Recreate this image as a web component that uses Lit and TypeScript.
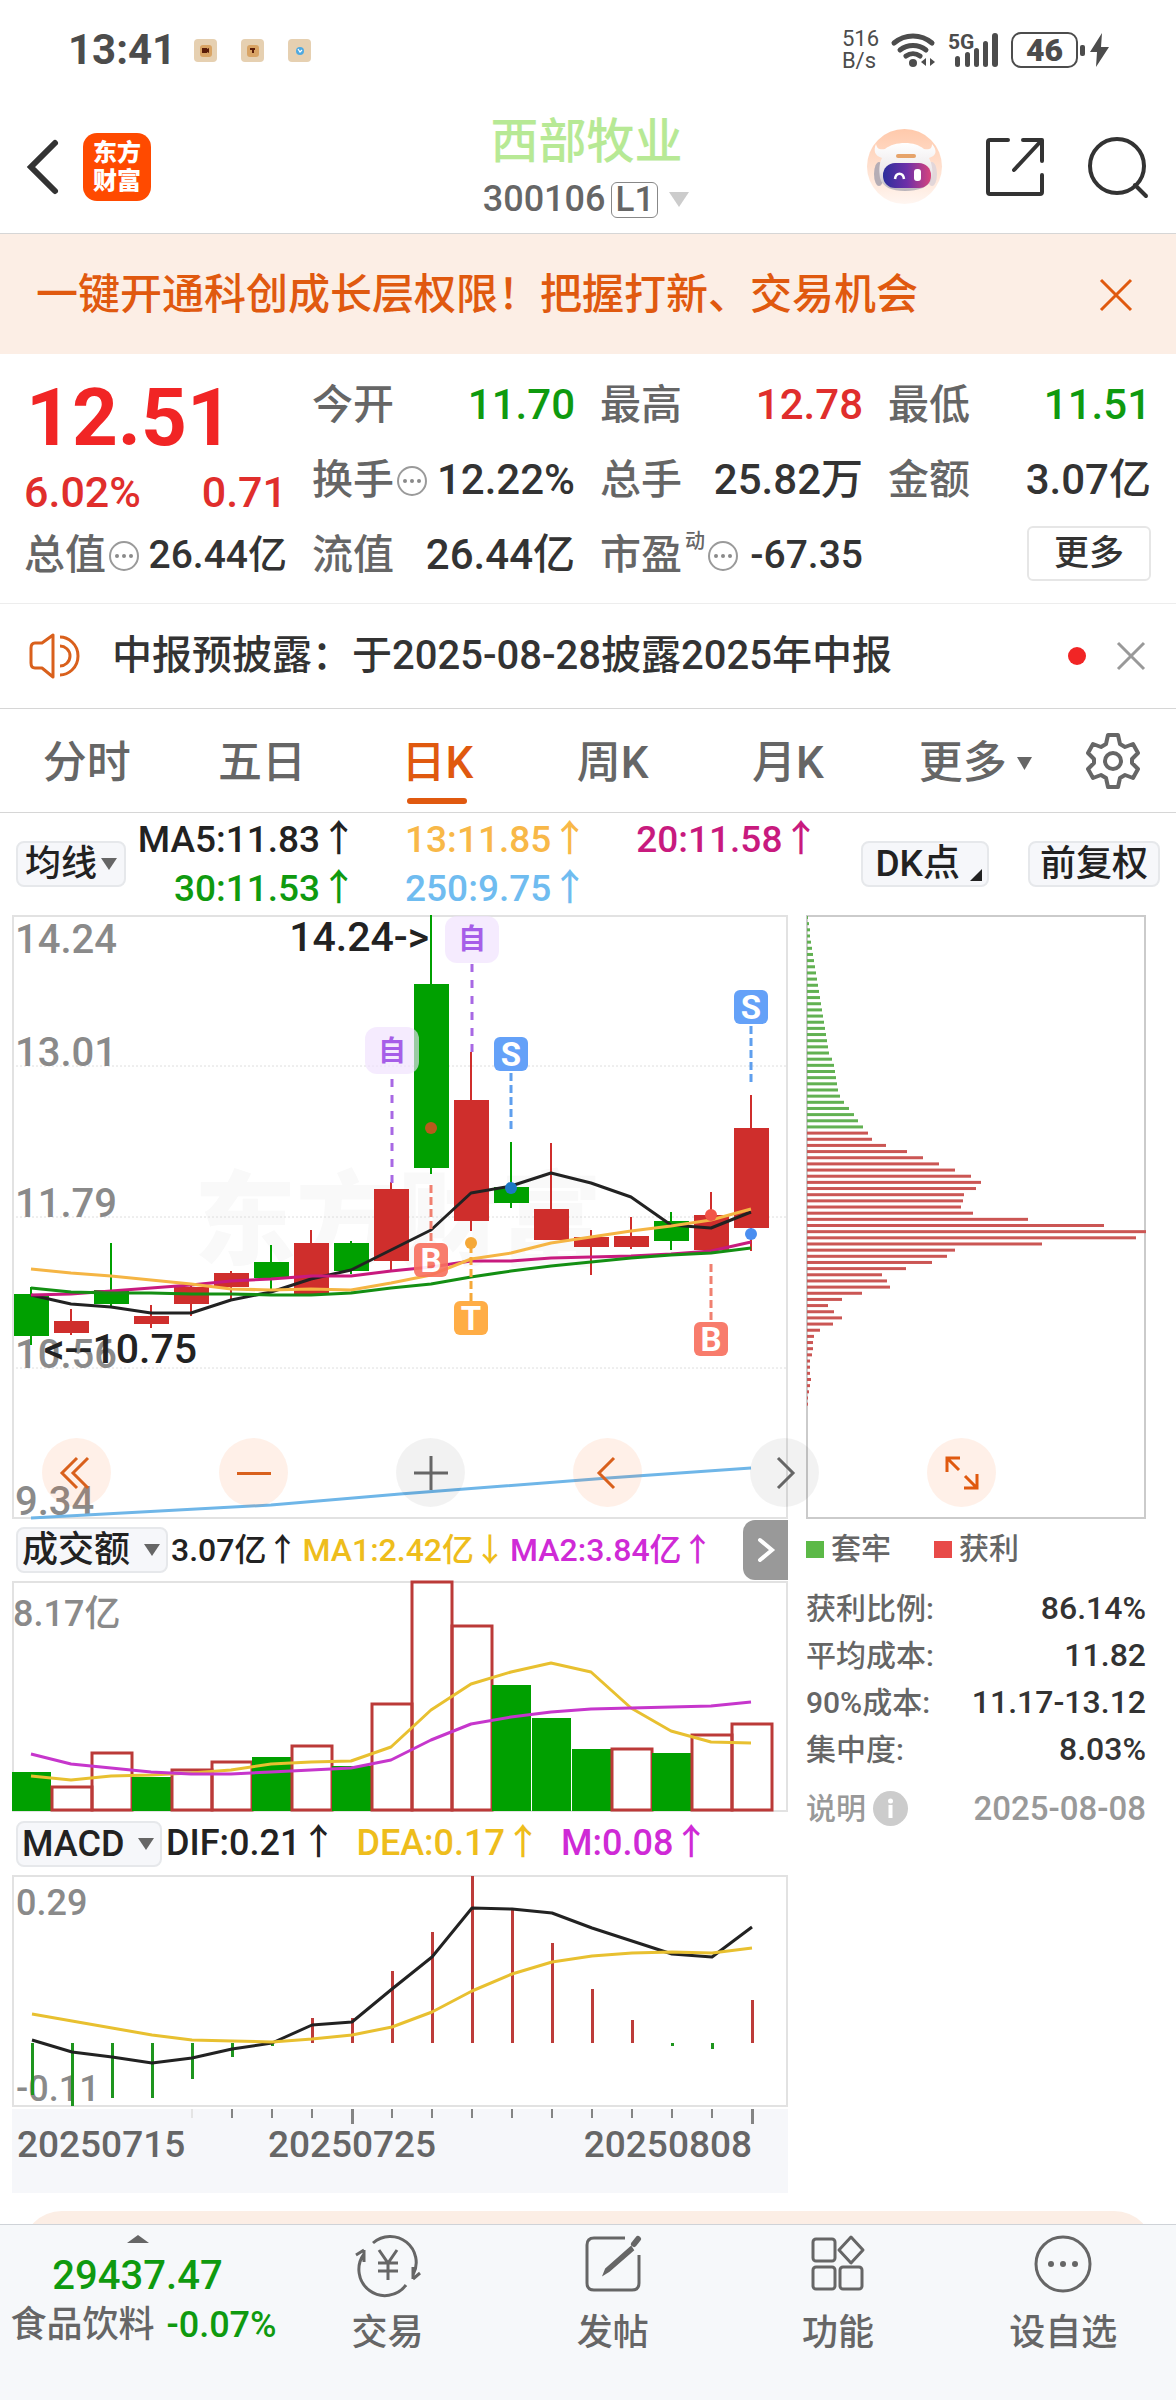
import { LitElement, html, svg, css } from "lit";
import { customElement, state } from "lit/decorators.js";

const UP = "#cf2e2c";
const DOWN = "#00a000";

const shared = css`
  :host {
    display: block;
  }
  svg {
    display: block;
    overflow: visible;
  }
  .plot {
    width: 100%;
    height: auto;
  }
  .frame {
    fill: none;
    stroke: #e2e2e2;
    stroke-width: 2;
  }
  .line {
    fill: none;
    stroke-width: 3;
    stroke-linejoin: round;
  }
  .scale {
    fill: #8a8a8a;
    font-weight: 500;
  }
`;

const path = (ys: number[], x0: number) =>
  ys.map((y, i) => `${x0 + i * 40},${y}`).join(" ");

/* open flag, body top, body bottom, wick top, wick bottom */
const CANDLES: [boolean, number, number, number, number][] = [
  [false, 379, 421, 372, 430],
  [true, 406, 418, 394, 420],
  [false, 375, 389, 328, 392],
  [true, 401, 409, 390, 413],
  [true, 372, 389, 369, 401],
  [true, 358, 372, 356, 385],
  [false, 347, 363, 330, 376],
  [true, 328, 379, 315, 379],
  [false, 328, 356, 326, 359],
  [true, 274, 346, 267, 356],
  [false, 69, 253, 0, 259],
  [true, 185, 306, 137, 316],
  [false, 272, 288, 227, 293],
  [true, 294, 325, 228, 325],
  [true, 322, 332, 315, 360],
  [true, 321, 332, 302, 334],
  [false, 306, 326, 297, 335],
  [true, 300, 335, 277, 335],
  [true, 213, 313, 180, 336],
];

const MA5 = [380, 389, 392, 398, 398, 385, 377, 364, 355, 335, 315, 278, 271, 258, 268, 282, 310, 313, 297];
const MA13 = [354, 358, 361, 365, 369, 374, 375, 374, 375, 368, 360, 344, 338, 328, 322, 316, 311, 305, 294];
const MA20 = [380, 379, 376, 373, 370, 366, 364, 361, 361, 356, 352, 346, 346, 343, 342, 341, 339, 336, 327];
const MA30 = [373, 377, 378, 378, 379, 379, 380, 380, 378, 373, 369, 362, 356, 351, 347, 343, 340, 338, 333];

@customElement("price-chart")
export class PriceChart extends LitElement {
  static styles = [
    shared,
    css`
      .grid {
        stroke: #dedede;
        stroke-width: 1;
        stroke-dasharray: 2 2;
      }
      .mark {
        fill: #fff;
        font-size: 33px;
        font-weight: 700;
        text-anchor: middle;
      }
      .self {
        fill: #a65ee8;
        font-size: 28px;
        font-weight: 700;
        text-anchor: middle;
      }
      .note {
        fill: #222;
        font-size: 41px;
        font-weight: 500;
        text-anchor: end;
      }
      .watermark {
        fill: #f9f9f9;
        font-size: 102px;
        font-weight: 900;
      }
    `,
  ];

  private badge(x: number, y: number, letter: string, color: string) {
    return svg`
      <rect x=${x} y=${y} width="34" height="34" rx="6" fill=${color}></rect>
      <text class="mark" x=${x + 17} y=${y + 29}>${letter}</text>`;
  }

  private dash(x: number, y1: number, y2: number, color: string, step = "8 4") {
    return svg`<line x1=${x} x2=${x} y1=${y1} y2=${y2} stroke=${color} stroke-width="3" stroke-dasharray=${step}></line>`;
  }

  render() {
    return html`<svg class="plot" viewBox="0 0 776 604" role="img" aria-label="日K">
      <text class="watermark" x="182" y="342">东方财富</text>
      ${[151, 302, 453].map((y) => svg`<line class="grid" x1="0" x2="776" y1=${y} y2=${y}></line>`)}
      <rect class="frame" x="1" y="1" width="774" height="602"></rect>
      ${[["14.24", 38], ["13.01", 151], ["11.79", 302], ["10.56", 453], ["9.34", 600]].map(
        ([t, y]) => svg`<text class="scale" font-size="40" x="3" y=${y}>${t}</text>`
      )}
      ${CANDLES.map(([up, top, bottom, high, low], i) => {
        const x = 19 + i * 40;
        const c = up ? UP : DOWN;
        return svg`
          <rect x=${x - 1} y=${high} width="2" height=${low - high} fill=${c}></rect>
          <rect x=${x - 17} y=${top} width="35" height=${bottom - top} fill=${c}></rect>`;
      })}
      <polyline class="line" stroke="#222" points=${path(MA5, 19)}></polyline>
      <polyline class="line" stroke="#c81a7e" points=${path(MA20, 19)}></polyline>
      <polyline class="line" stroke="#f5b544" points=${path(MA13, 19)}></polyline>
      <polyline class="line" stroke="#138f13" points=${path(MA30, 19)}></polyline>
      <polyline class="line" stroke="#6fb6e8" points="19,603 259,590 388,579 596,563 739,553"></polyline>
      <text class="note" x="417" y="36">14.24-&gt;</text>
      <text class="note" x="185" y="448">&lt;--10.75</text>
      ${this.dash(380, 164, 268, "#a868e4", "8 8")}
      ${this.dash(460, 49, 137, "#a868e4", "8 8")}
      ${this.dash(499, 158, 214, "#5f9fee")}
      ${this.dash(739, 111, 168, "#5f9fee")}
      ${this.dash(419, 270, 328, "#f08070")}
      ${this.dash(699, 349, 406, "#f08070")}
      <rect x="353" y="112" width="54" height="47" rx="12" fill="#f0e0fd" fill-opacity=".65"></rect>
      <text class="self" x="380" y="146">自</text>
      <rect x="433" y="1" width="54" height="47" rx="12" fill="#f0e0fd" fill-opacity=".65"></rect>
      <text class="self" x="460" y="34">自</text>
      ${this.badge(482, 122, "S", "#64a1f8")}
      ${this.badge(722, 75, "S", "#64a1f8")}
      <g opacity=".9">${this.badge(402, 328, "B", "#f8705e")}</g>
      ${this.badge(682, 407, "B", "#f87c6c")}
      ${this.badge(442, 386, "T", "#ffad46")}
      ${this.dash(459, 330, 386, "#f5a838")}
      <circle cx="459" cy="328" r="6" fill="#f5a838"></circle>
      <circle cx="419" cy="213" r="6" fill="#b85a1c"></circle>
      <circle cx="499" cy="273" r="6" fill="#1c78c4"></circle>
      <circle cx="699" cy="300" r="6" fill="#f25548"></circle>
      <circle cx="739" cy="319" r="6" fill="#4a8ef0"></circle>
    </svg>`;
  }
}

const VOLUME: [boolean, number][] = [
  [false, 191], [true, 206], [true, 172], [false, 196], [true, 189], [true, 181],
  [false, 176], [true, 165], [false, 185], [true, 123], [true, 1], [true, 45],
  [false, 104], [false, 137], [false, 168], [true, 168], [false, 172], [true, 154], [true, 143],
];
const VOL_MA1 = [195, 199, 195, 194, 192, 189, 183, 181, 180, 166, 129, 103, 91, 82, 91, 127, 150, 161, 162];
const VOL_MA2 = [173, 183, 187, 191, 193, 193, 191, 189, 187, 179, 159, 143, 136, 131, 128, 127, 126, 125, 121];

@customElement("volume-chart")
export class VolumeChart extends LitElement {
  static styles = [shared];

  render() {
    return html`<svg class="plot" viewBox="0 0 776 231" role="img" aria-label="成交额">
      <rect class="frame" x="1" y="1" width="774" height="229"></rect>
      <text class="scale" font-size="36" x="1" y="45">8.17亿</text>
      ${VOLUME.map(([up, top], i) =>
        up
          ? svg`<rect x=${i * 40} y=${top} width="40" height=${229 - top} fill="none" stroke="#bb3a38" stroke-width="3"></rect>`
          : svg`<rect x=${i * 40} y=${top} width="39" height=${230 - top} fill=${DOWN}></rect>`
      )}
      <polyline class="line" stroke="#e8c030" points=${path(VOL_MA1, 19)}></polyline>
      <polyline class="line" stroke="#c636cc" points=${path(VOL_MA2, 19)}></polyline>
    </svg>`;
  }
}

const MACD = [220, 231, 223, 223, 204, 182, 171, 143, 143, 96, 57, 1, 35, 68, 114, 145, 171, 174, 125];
const DIF = [165, 177, 182, 188, 183, 174, 168, 150, 147, 114, 82, 33, 34, 38, 53, 66, 79, 82, 52];
const DEA = [139, 146, 153, 160, 165, 166, 167, 164, 160, 152, 137, 116, 99, 87, 81, 78, 77, 78, 73];

@customElement("macd-chart")
export class MacdChart extends LitElement {
  static styles = [
    shared,
    css`
      .axis {
        margin-top: 2px;
        background: #f6f7fa;
      }
      .date {
        fill: #666;
        font-size: 37px;
        font-weight: 500;
      }
    `,
  ];

  render() {
    return html`<svg class="plot" viewBox="0 0 776 232" role="img" aria-label="MACD">
        <rect class="frame" x="1" y="1" width="774" height="230"></rect>
        <text class="scale" font-size="36" x="4" y="40">0.29</text>
        <text class="scale" font-size="36" x="4" y="226">-0.11</text>
        ${MACD.map((y, i) => {
          const down = y > 168;
          return svg`<rect x=${19 + i * 40} y=${down ? 168 : y} width="3" height=${Math.abs(y - 168)} fill=${down ? "#1e951e" : "#bd3c3a"}></rect>`;
        })}
        <polyline class="line" stroke="#222" points=${path(DIF, 20)}></polyline>
        <polyline class="line" stroke="#e8c030" points=${path(DEA, 20)}></polyline>
      </svg>
      <svg class="plot axis" viewBox="0 0 776 84">
        ${Array.from({ length: 15 }, (_, k) => k + 4).map((i) => {
          const major = i === 8 || i === 18;
          return svg`<rect x=${19 + i * 40} y="0" width=${major ? 3 : 2} height=${major ? 15 : 9} fill=${i === 4 ? "#e4e4e4" : "#848484"}></rect>`;
        })}
        <text class="date" x="5" y="48">20250715</text>
        <text class="date" x="340" y="48" text-anchor="middle">20250725</text>
        <text class="date" x="740" y="48" text-anchor="end">20250808</text>
      </svg>`;
  }
}

const TRAPPED = [
  1, 2, 3, 3, 4, 5, 6, 7, 8, 9, 10, 11, 12, 13, 14, 15, 16, 17, 18, 19, 20, 21, 22, 25, 27, 28, 29, 30, 31, 33, 37,
  42, 47, 51, 56,
];
const PROFIT = [
  61, 65, 79, 100, 116, 132, 148, 164, 174, 169, 157, 156, 154, 166, 221, 297, 339, 329, 235, 148, 140, 125, 99, 75,
  80, 83, 55, 35, 21, 27, 35, 26, 13, 7, 6, 6, 5, 3, 3, 3, 4, 3, 2, 1, 1,
];

@customElement("cost-chart")
export class CostChart extends LitElement {
  static styles = [
    shared,
    css`
      .frame {
        stroke: #cbcbcb;
      }
    `,
  ];

  render() {
    const all = [...TRAPPED, ...PROFIT];
    return html`<svg class="plot" viewBox="0 0 340 604" role="img" aria-label="套牢 获利">
      <rect class="frame" x="1" y="1" width="338" height="602"></rect>
      ${all.map(
        (w, i) =>
          svg`<rect x="1" y=${1 + i * 6.16} width=${w} height="3" fill=${i < TRAPPED.length ? "#62b152" : "#cb5654"}></rect>`
      )}
    </svg>`;
  }
}

const arrowDown = html`<svg class="tri" width="16" height="12" viewBox="0 0 16 12"><path d="M0 0h16L8 12z" fill="#666" /></svg>`;
const moreDots = html`<svg width="30" height="30" viewBox="0 0 30 30">
  <circle cx="15" cy="15" r="14" fill="none" stroke="#9a9a9a" stroke-width="2" />
  <circle cx="8" cy="15" r="2" fill="#8a8a8a" /><circle cx="15" cy="15" r="2" fill="#8a8a8a" /><circle cx="22" cy="15" r="2" fill="#8a8a8a" />
</svg>`;

@customElement("app-root")
export class AppRoot extends LitElement {
  @state() private tab = "日K";

  static styles = css`
    :host {
      display: block;
      font-family: Roboto, "Noto Sans CJK SC", sans-serif;
      font-weight: 500;
      line-height: 1.2;
      color: #333;
      background: #fff;
    }
    * {
      box-sizing: border-box;
    }
    svg {
      display: block;
      flex: none;
      overflow: visible;
    }
    button,
    select {
      font: inherit;
      color: inherit;
      background: none;
      border: 0;
      padding: 0;
      margin: 0;
      appearance: none;
      cursor: pointer;
      white-space: nowrap;
    }
    a {
      color: inherit;
      text-decoration: none;
    }
    h1,
    p,
    dl,
    dd,
    dt {
      margin: 0;
      font-weight: 500;
    }
    .up {
      color: #e02e2c;
    }
    .down {
      color: #0f9a0f;
    }

    .status {
      display: flex;
      align-items: center;
      height: 100px;
      padding: 0 66px 0 68px;
      color: #4c4c4c;
    }
    .clock {
      font-size: 42px;
      font-weight: 700;
    }
    .notes {
      display: flex;
      gap: 24px;
      margin: 0 auto 0 18px;
    }
    .speed {
      font-size: 22px;
      line-height: 22px;
      font-weight: 400;
      margin-right: 12px;
    }
    .signal {
      margin: 0 11px 0 11px;
    }
    .battery {
      display: flex;
      align-items: center;
      gap: 6px;
    }
    .level {
      width: 67px;
      height: 36px;
      border: 2px solid #4c4c4c;
      border-radius: 10px;
      font-size: 32px;
      line-height: 33px;
      font-weight: 900;
      text-align: center;
    }

    .header {
      display: grid;
      grid-template-columns: 1fr auto 1fr;
      align-items: center;
      height: 134px;
      padding: 0 28px 0 25px;
      border-bottom: 1px solid #d6d6d6;
    }
    .left,
    .right {
      display: flex;
      align-items: center;
      gap: 24px;
    }
    .right {
      justify-content: flex-end;
      gap: 44px;
    }
    .logo {
      width: 68px;
      height: 68px;
      padding-top: 6px;
      border-radius: 14px;
      background: #ff4a00;
      color: #fff;
      font-size: 24px;
      line-height: 28px;
      font-weight: 900;
      text-align: center;
    }
    .name {
      font-size: 48px;
      line-height: 58px;
      padding-top: 8px;
      color: #b7e995;
      text-align: center;
    }
    .code {
      display: flex;
      align-items: center;
      gap: 6px;
      font-size: 36px;
      line-height: 57px;
      color: #666;
    }
    .lv {
      border: 1px solid #888;
      border-radius: 6px;
      font-size: 35px;
      line-height: 34px;
      padding: 0 3px;
    }
    .code .tri {
      margin-left: 4px;
    }

    .promo {
      display: flex;
      align-items: center;
      justify-content: space-between;
      height: 120px;
      padding: 2px 43px 0 36px;
      background: #fceee5;
      color: #e0590f;
      font-size: 42px;
    }

    .quote {
      display: grid;
      grid-template-columns: repeat(4, minmax(0, 1fr));
      grid-auto-rows: 75px;
      column-gap: 25px;
      padding: 14px 25px 10px 24px;
      border-bottom: 1px solid #ededed;
      font-size: 42px;
    }
    .last {
      grid-row: span 2;
      padding-top: 8px;
    }
    .price {
      padding-left: 2px;
      font-size: 80px;
      line-height: 84px;
      font-weight: 700;
      color: #f12525;
    }
    .change {
      display: flex;
      justify-content: space-between;
      font-size: 43px;
      line-height: 64px;
    }
    .cell {
      display: flex;
      align-items: center;
      white-space: nowrap;
    }
    .cell dt {
      color: #666;
      display: flex;
      align-items: center;
      gap: 3px;
      font-size: 41px;
    }
    .cell dd {
      margin-left: auto;
    }
    .cell.small dd {
      font-size: 39px;
    }
    .cell sup {
      font-size: 20px;
      line-height: 20px;
      align-self: flex-start;
    }
    .end {
      display: flex;
      justify-content: flex-end;
      align-items: center;
    }
    .more {
      width: 124px;
      height: 55px;
      border: 2px solid #e6e6e6;
      border-radius: 6px;
      font-size: 35px;
      line-height: 48px;
      margin-bottom: 4px;
    }

    .notice {
      display: flex;
      align-items: center;
      height: 105px;
      padding: 0 30px;
      border-bottom: 1px solid #d6d6d6;
      font-size: 40px;
    }
    .notice a {
      margin: 0 auto 0 32px;
    }
    .dot {
      width: 18px;
      height: 18px;
      border-radius: 50%;
      background: #f12525;
      margin-right: 30px;
    }

    .tabs {
      display: grid;
      grid-template-columns: repeat(6, minmax(0, 1fr)) 124px;
      height: 104px;
      border-bottom: 1px solid #d6d6d6;
      font-size: 44px;
      color: #666;
    }
    .tabs button {
      display: flex;
      align-items: center;
      justify-content: center;
      gap: 10px;
      padding: 6px 2px 0 0;
    }
    .tabs .rest {
      padding-left: 24px;
    }
    .tabs .gear {
      padding-top: 0;
    }
    .tabs .on {
      color: #e0590f;
      position: relative;
    }
    .tabs .on::after {
      content: "";
      position: absolute;
      bottom: 8px;
      width: 60px;
      height: 6px;
      border-radius: 3px;
      background: #e0590f;
    }

    .averages {
      display: flex;
      align-items: center;
      height: 102px;
      padding: 0 16px;
      font-size: 37px;
      color: #222;
    }
    .chip {
      display: flex;
      align-items: center;
      height: 46px;
      border: 2px solid #e6e8eb;
      border-radius: 8px;
      background: #f6f7fa;
      font-size: 36px;
      line-height: 40px;
      color: #222;
    }
    .mas {
      flex: 1;
      display: grid;
      grid-template-columns: repeat(3, 1fr);
      line-height: 49px;
      text-align: right;
      white-space: nowrap;
    }
    .pick {
      padding: 0 7px;
      gap: 3px;
    }
    .pick.wide {
      padding: 0 6px 0 4px;
      gap: 13px;
    }
    .dk {
      margin: 0 39px 0 42px;
      padding: 0 5px 0 12px;
      gap: 10px;
      font-size: 37px;
    }
    .dk svg {
      align-self: flex-end;
      margin-bottom: 4px;
    }
    .adj {
      padding: 0 10px;
    }

    .charts {
      position: relative;
      display: grid;
      grid-template-columns: minmax(0, 776fr) minmax(0, 340fr);
      column-gap: 18px;
      margin: 0 30px 0 12px;
    }
    .study {
      display: flex;
      align-items: center;
      height: 62px;
      padding-left: 4px;
      font-size: 36px;
      color: #222;
      white-space: nowrap;
    }
    .study.macd {
      height: 63px;
    }
    .vals {
      display: flex;
      gap: 20px;
      margin-left: 4px;
    }
    .vals.tight {
      gap: 4px;
      font-size: 32px;
      margin-left: 3px;
    }
    .next {
      width: 45px;
      height: 60px;
      margin-left: auto;
      border-radius: 12px 0 0 12px;
      background: #999;
      display: grid;
      place-items: center;
    }
    .tools {
      position: absolute;
      left: 30px;
      right: 150px;
      top: 0;
      display: flex;
      justify-content: space-between;
      pointer-events: none;
      padding-top: 523px;
    }
    .tools button {
      width: 69px;
      height: 69px;
      border-radius: 50%;
      display: grid;
      place-items: center;
      background: rgba(255, 110, 30, 0.1);
      pointer-events: auto;
    }
    .tools .grey {
      background: rgba(0, 0, 0, 0.05);
    }

    .side {
      font-size: 30px;
      color: #666;
    }
    .legend {
      display: flex;
      align-items: center;
      height: 60px;
      gap: 7px;
      margin-bottom: 6px;
    }
    .key {
      width: 18px;
      height: 17px;
      background: #5cb947;
    }
    .key.red {
      background: #e84a48;
      margin-left: 36px;
    }
    .side .row {
      display: flex;
      align-items: center;
      justify-content: space-between;
      height: 47px;
      white-space: nowrap;
    }
    .side dd {
      color: #333;
      font-size: 32px;
    }
    .side .about {
      display: flex;
      align-items: center;
      gap: 7px;
      margin-top: 12px;
      height: 47px;
      color: #999;
    }
    .side time {
      margin-left: auto;
      font-size: 33px;
    }

    .peek {
      height: 13px;
      margin: 18px 22px 0;
      overflow: hidden;
    }
    .peek::before {
      content: "";
      display: block;
      height: 80px;
      border-radius: 40px;
      background: #fceee5;
    }
    .nav {
      display: grid;
      grid-template-columns: 275px repeat(4, minmax(0, 1fr));
      height: 176px;
      border-top: 1px solid #cfd3d8;
      background: #f6f8fa;
      color: #666;
      font-size: 36px;
    }
    .nav a {
      display: flex;
      flex-direction: column;
      align-items: center;
      padding-top: 10px;
      line-height: 40px;
    }
    .nav a.item {
      gap: 20px;
    }
    .index {
      font-size: 40px;
      line-height: 48px;
      margin-top: 9px;
    }
    .sector {
      display: flex;
      gap: 12px;
      padding-left: 12px;
      line-height: 50px;
      white-space: nowrap;
    }
  `;

  private cell(label: unknown, value: string, tone = "", size = "") {
    return html`<dl class="cell ${size}"><dt>${label}</dt><dd class=${tone}>${value}</dd></dl>`;
  }

  private pick(name: string, wide = "") {
    return html`<label class="chip pick ${wide}"><select aria-label=${name}><option>${name}</option></select>${arrowDown}</label>`;
  }

  render() {
    return html`
      <div class="status">
        <span class="clock">13:41</span>
        <div class="notes">
          <svg width="23" height="23" viewBox="0 0 23 23"><rect width="23" height="23" rx="4" fill="#e6d0b1" /><rect x="6" y="6" width="12" height="12" rx="3" fill="#d9a465" /><path d="M8 9h5v1l2-1v5l-2-1v1H8z" fill="#5a1c08" /></svg>
          <svg width="23" height="23" viewBox="0 0 23 23"><rect width="23" height="23" rx="4" fill="#e6d0b1" /><rect x="6" y="6" width="12" height="12" rx="3" fill="#d9a465" /><path d="M9 10h5M12 9v5" stroke="#5a1c08" stroke-width="2" /></svg>
          <svg width="23" height="23" viewBox="0 0 23 23"><rect width="23" height="23" rx="4" fill="#e6d0b1" /><circle cx="12" cy="12" r="4" fill="#4fa9e0" /><path d="M10 10l2 3 2-2" fill="none" stroke="#fff" stroke-width="1.2" /></svg>
        </div>
        <div class="speed">516<br />B/s</div>
        <svg width="46" height="36" viewBox="0 0 46 36" fill="none" stroke="#4c4c4c" stroke-width="5" stroke-linecap="round">
          <path d="M3 11a29 29 0 0 1 38 0M9 18a21 21 0 0 1 26 0M15 24a12 12 0 0 1 14 0" />
          <circle cx="22" cy="31" r="4" fill="#4c4c4c" stroke="none" />
          <path d="M35 26v8l-5-4zM39 26v8l5-4z" fill="#4c4c4c" stroke="none" />
        </svg>
        <svg class="signal" width="52" height="36" viewBox="0 0 52 36" fill="#4c4c4c">
          <text x="0" y="17" font-size="21" font-weight="700">5G</text>
          <rect x="7" y="24" width="5" height="11" rx="2.5" /><rect x="17" y="20" width="5" height="15" rx="2.5" /><rect x="26" y="16" width="5" height="19" rx="2.5" /><rect x="35" y="9" width="5" height="26" rx="2.5" /><rect x="44" y="1" width="6" height="34" rx="3" />
        </svg>
        <div class="battery">
          <div class="level">46</div>
          <svg width="26" height="36" viewBox="0 0 26 36" fill="#4c4c4c"><rect x="-4" y="13" width="5" height="11" rx="2" /><path d="M18 1L6 20h7l-1 15 13-20h-8z" /></svg>
        </div>
      </div>

      <header class="header">
        <div class="left">
          <button aria-label="返回">
            <svg width="34" height="56" viewBox="0 0 34 56"><path d="M30 4L6 28l24 24" fill="none" stroke="#333" stroke-width="6" stroke-linecap="round" stroke-linejoin="miter" /></svg>
          </button>
          <a class="logo" href="#">东方<br />财富</a>
        </div>
        <div>
          <h1 class="name">西部牧业</h1>
          <div class="code">
            300106<span class="lv">L1</span>
            <svg class="tri" width="22" height="15" viewBox="0 0 22 15"><path d="M1 0h20L11 15z" fill="#ccc" /></svg>
          </div>
        </div>
        <div class="right">
          <button aria-label="助手">
            <svg width="75" height="75" viewBox="0 0 75 75">
              <defs>
                <linearGradient id="halo" x2="0" y2="1"><stop offset="0" stop-color="#ffc9ab" /><stop offset="1" stop-color="#fff6f1" /></linearGradient>
                <linearGradient id="visor"><stop offset="0" stop-color="#2c2f9c" /><stop offset=".5" stop-color="#6d2fa8" /><stop offset="1" stop-color="#d8447c" /></linearGradient>
                <linearGradient id="shell" x2="0" y2="1"><stop offset="0" stop-color="#fff" /><stop offset=".6" stop-color="#ece8ea" /><stop offset="1" stop-color="#b9b3b9" /></linearGradient>
              </defs>
              <circle cx="37.5" cy="37.5" r="37.5" fill="url(#halo)" />
              <ellipse cx="12" cy="45" rx="5" ry="12" fill="#b5adb5" /><ellipse cx="65" cy="45" rx="5" ry="12" fill="#e2d6d9" />
              <path d="M9 15c-3 7-1 12 6 14-3 6-3 12-2 20 2 9 12 13 25 13s25-4 27-13c1-8 0-14-3-20 7-2 9-7 3-14 0 5-3 6-8 5-5-4-11-6-19-6s-15 2-20 6c-5 1-8 0-9-5z" fill="url(#shell)" />
              <rect x="16" y="34" width="48" height="25" rx="12" fill="url(#visor)" />
              <rect x="29" y="25" width="20" height="4" rx="2" fill="#e6a36a" />
              <path d="M28 50c1-7 8-7 9 0" fill="none" stroke="#fff" stroke-width="2.5" />
              <rect x="47" y="40" width="7" height="12" rx="3" fill="#fff" />
            </svg>
          </button>
          <button aria-label="分享">
            <svg width="58" height="58" viewBox="0 0 58 58" fill="none" stroke="#333" stroke-width="4" stroke-linecap="round" stroke-linejoin="round"><path d="M22 2H4q-2 0-2 2v50q0 2 2 2h50q2 0 2-2V37M37 2h19v21M55 3L28 32" /></svg>
          </button>
          <button aria-label="搜索">
            <svg width="60" height="60" viewBox="0 0 60 60" fill="none" stroke="#333" stroke-width="4" stroke-linecap="round"><circle cx="29" cy="29" r="27" /><path d="M47 48l11 11" /></svg>
          </button>
        </div>
      </header>

      <div class="promo">
        <a href="#">一键开通科创成长层权限！把握打新、交易机会</a>
        <button aria-label="关闭">
          <svg width="34" height="34" viewBox="0 0 34 34"><path d="M2 2l30 30M32 2L2 32" stroke="#e0590f" stroke-width="3" /></svg>
        </button>
      </div>

      <section class="quote">
        <div class="last">
          <div class="price">12.51</div>
          <div class="change up"><span>6.02%</span><span>0.71</span></div>
        </div>
        ${this.cell("今开", "11.70", "down")} ${this.cell("最高", "12.78", "up")} ${this.cell("最低", "11.51", "down")}
        ${this.cell(html`换手${moreDots}`, "12.22%")} ${this.cell("总手", "25.82万")} ${this.cell("金额", "3.07亿")}
        ${this.cell(html`总值${moreDots}`, "26.44亿", "", "small")} ${this.cell("流值", "26.44亿")}
        ${this.cell(html`市盈<sup>动</sup>${moreDots}`, "-67.35", "", "small")}
        <div class="end"><button class="more">更多</button></div>
      </section>

      <div class="notice">
        <svg width="50" height="46" viewBox="0 0 50 46" fill="none" stroke="#d9601c" stroke-width="3" stroke-linejoin="round"><path d="M23 2v42L12 35H5q-4 0-4-5V15q0-5 4-5h7zM30 4c8 0 18 7 18 19s-10 19-18 19M30 13c5 0 10 4 10 10s-5 10-10 10" /></svg>
        <a href="#">中报预披露：于2025-08-28披露2025年中报</a>
        <span class="dot"></span>
        <button aria-label="关闭">
          <svg width="30" height="30" viewBox="0 0 30 30"><path d="M2 2l26 26M28 2L2 28" stroke="#999" stroke-width="3" /></svg>
        </button>
      </div>

      <nav class="tabs">
        ${["分时", "五日", "日K", "周K", "月K"].map(
          (t) => html`<button class=${t === this.tab ? "on" : ""} @click=${() => (this.tab = t)}>${t}</button>`
        )}
        <button class="rest">更多<svg width="15" height="13" viewBox="0 0 15 13"><path d="M0 0h15L7.500 13z" fill="#666" /></svg></button>
        <button class="gear" aria-label="设置">
          <svg width="52" height="56" viewBox="0 0 52 56" fill="none" stroke="#666" stroke-width="4" stroke-linejoin="round">
            <path d="M21 2h10l2 9 5 3 8-3 5 9-6 6v4l6 6-5 9-8-3-5 3-2 9H21l-2-9-5-3-8 3-5-9 6-6v-4l-6-6 5-9 8 3 5-3z" />
            <circle cx="26" cy="28" r="8" />
          </svg>
        </button>
      </nav>

      <div class="averages">
        ${this.pick("均线")}
        <div class="mas">
          <span>MA5:11.83↑</span>
          <span style="color:#f8b848">13:11.85↑</span>
          <span style="color:#c81a7e">20:11.58↑</span>
          <span style="color:#0f9a0f">30:11.53↑</span>
          <span style="color:#6fbcf0">250:9.75↑</span>
        </div>
        <button class="chip dk">DK点<svg width="12" height="12" viewBox="0 0 12 12"><path d="M12 0v12H0z" fill="#222" /></svg></button>
        <button class="chip adj">前复权</button>
      </div>

      <main class="charts">
        <div>
          <price-chart></price-chart>
          <div class="study">
            ${this.pick("成交额", "wide")}
            <div class="vals tight">
              <span>3.07亿↑</span><span style="color:#eebd1c">MA1:2.42亿↓</span><span style="color:#cf2ad6">MA2:3.84亿↑</span>
            </div>
            <button class="next" aria-label="下一项">
              <svg width="18" height="26" viewBox="0 0 18 26"><path d="M3 3l12 10L3 23" fill="none" stroke="#fff" stroke-width="4" stroke-linecap="round" /></svg>
            </button>
          </div>
          <volume-chart></volume-chart>
          <div class="study macd">
            ${this.pick("MACD", "wide")}
            <div class="vals">
              <span>DIF:0.21↑</span><span style="color:#eebd1c">DEA:0.17↑</span><span style="color:#cf2ad6">M:0.08↑</span>
            </div>
          </div>
          <macd-chart></macd-chart>
        </div>
        <aside class="side">
          <cost-chart></cost-chart>
          <div class="legend"><span class="key"></span>套牢<span class="key red"></span>获利</div>
          ${[["获利比例:", "86.14%"], ["平均成本:", "11.82"], ["90%成本:", "11.17-13.12"], ["集中度:", "8.03%"]].map(
            ([k, v]) => html`<dl class="row"><dt>${k}</dt><dd>${v}</dd></dl>`
          )}
          <div class="about">
            说明
            <svg width="35" height="35" viewBox="0 0 35 35"><circle cx="17.500" cy="17.500" r="17.500" fill="#ccc" /><circle cx="17.500" cy="10" r="2.500" fill="#fff" /><rect x="15.500" y="14" width="4" height="13" fill="#fff" /></svg>
            <time>2025-08-08</time>
          </div>
        </aside>
        <div class="tools">
          <button aria-label="最左"><svg width="30" height="32" viewBox="3 0 30 32" fill="none" stroke="#d9601c" stroke-width="3"><path d="M18 1L3 16l15 15M29 1L14 16l15 15" /></svg></button>
          <button aria-label="缩小"><svg width="34" height="4" viewBox="0 0 34 4"><rect y="1" width="34" height="3" fill="#d9601c" /></svg></button>
          <button class="grey" aria-label="放大"><svg width="34" height="34" viewBox="0 0 34 34" stroke="#666" stroke-width="3"><path d="M0 17h34M17 0v34" /></svg></button>
          <button aria-label="左移"><svg width="20" height="32" viewBox="2 0 20 32" fill="none" stroke="#d9601c" stroke-width="3"><path d="M18 1L3 16l15 15" /></svg></button>
          <button class="grey" aria-label="右移"><svg width="20" height="32" viewBox="-1 0 20 32" fill="none" stroke="#666" stroke-width="3"><path d="M2 1l15 15L2 31" /></svg></button>
          <button aria-label="全屏"><svg width="34" height="34" viewBox="0 0 34 34" fill="none" stroke="#e0590f" stroke-width="3"><path d="M2 16V2h13M2 2l12 12M32 18v14H19M32 32L20 20" /></svg></button>
        </div>
      </main>

      <div class="peek"></div>
      <nav class="nav">
        <a class="board" href="#">
          <svg width="22" height="8" viewBox="0 0 22 8"><path d="M11 0l11 8H0z" fill="#666" /></svg>
          <span class="index down">29437.47</span>
          <span class="sector">食品饮料<span class="down">-0.07%</span></span>
        </a>
        <a class="item" href="#">
          <svg width="66" height="58" viewBox="0 0 66 58" fill="none" stroke="#666" stroke-width="3">
            <path d="M18 8A26 26 0 0 1 58 40M58 44V32M58 44l7-6M51 50A26 26 0 0 1 9 19M9 15v12M9 15l-8 5M24 15l9 13 9-13M33 28v17M23 28h20M23 36h20" />
          </svg>交易</a>
        <a class="item" href="#">
          <svg width="56" height="58" viewBox="0 0 56 58" fill="none" stroke="#666" stroke-width="3">
            <path d="M40 3H9Q2 3 2 10v38q0 7 7 7h38q7 0 7-7V20" /><path d="M46 12L48 15 24 36l-5 3 2-5z" fill="#666" stroke-width="2" /><path d="M49 9l4-5" stroke-width="6" stroke-linecap="round" />
          </svg>发帖</a>
        <a class="item" href="#">
          <svg width="54" height="58" viewBox="0 0 54 58" fill="none" stroke="#666" stroke-width="3" stroke-linejoin="round">
            <rect x="2" y="4" width="22" height="22" rx="3" /><rect x="2" y="32" width="22" height="22" rx="3" /><rect x="29" y="32" width="22" height="22" rx="3" /><path d="M40 2l12 13-12 13-12-13z" />
          </svg>功能</a>
        <a class="item" href="#">
          <svg width="58" height="58" viewBox="0 0 58 58" fill="none" stroke="#666" stroke-width="3"><circle cx="29" cy="29" r="27" /><g fill="#666" stroke="none"><circle cx="17" cy="29" r="3" /><circle cx="29" cy="29" r="3" /><circle cx="41" cy="29" r="3" /></g></svg>设自选</a>
      </nav>
    `;
  }
}
